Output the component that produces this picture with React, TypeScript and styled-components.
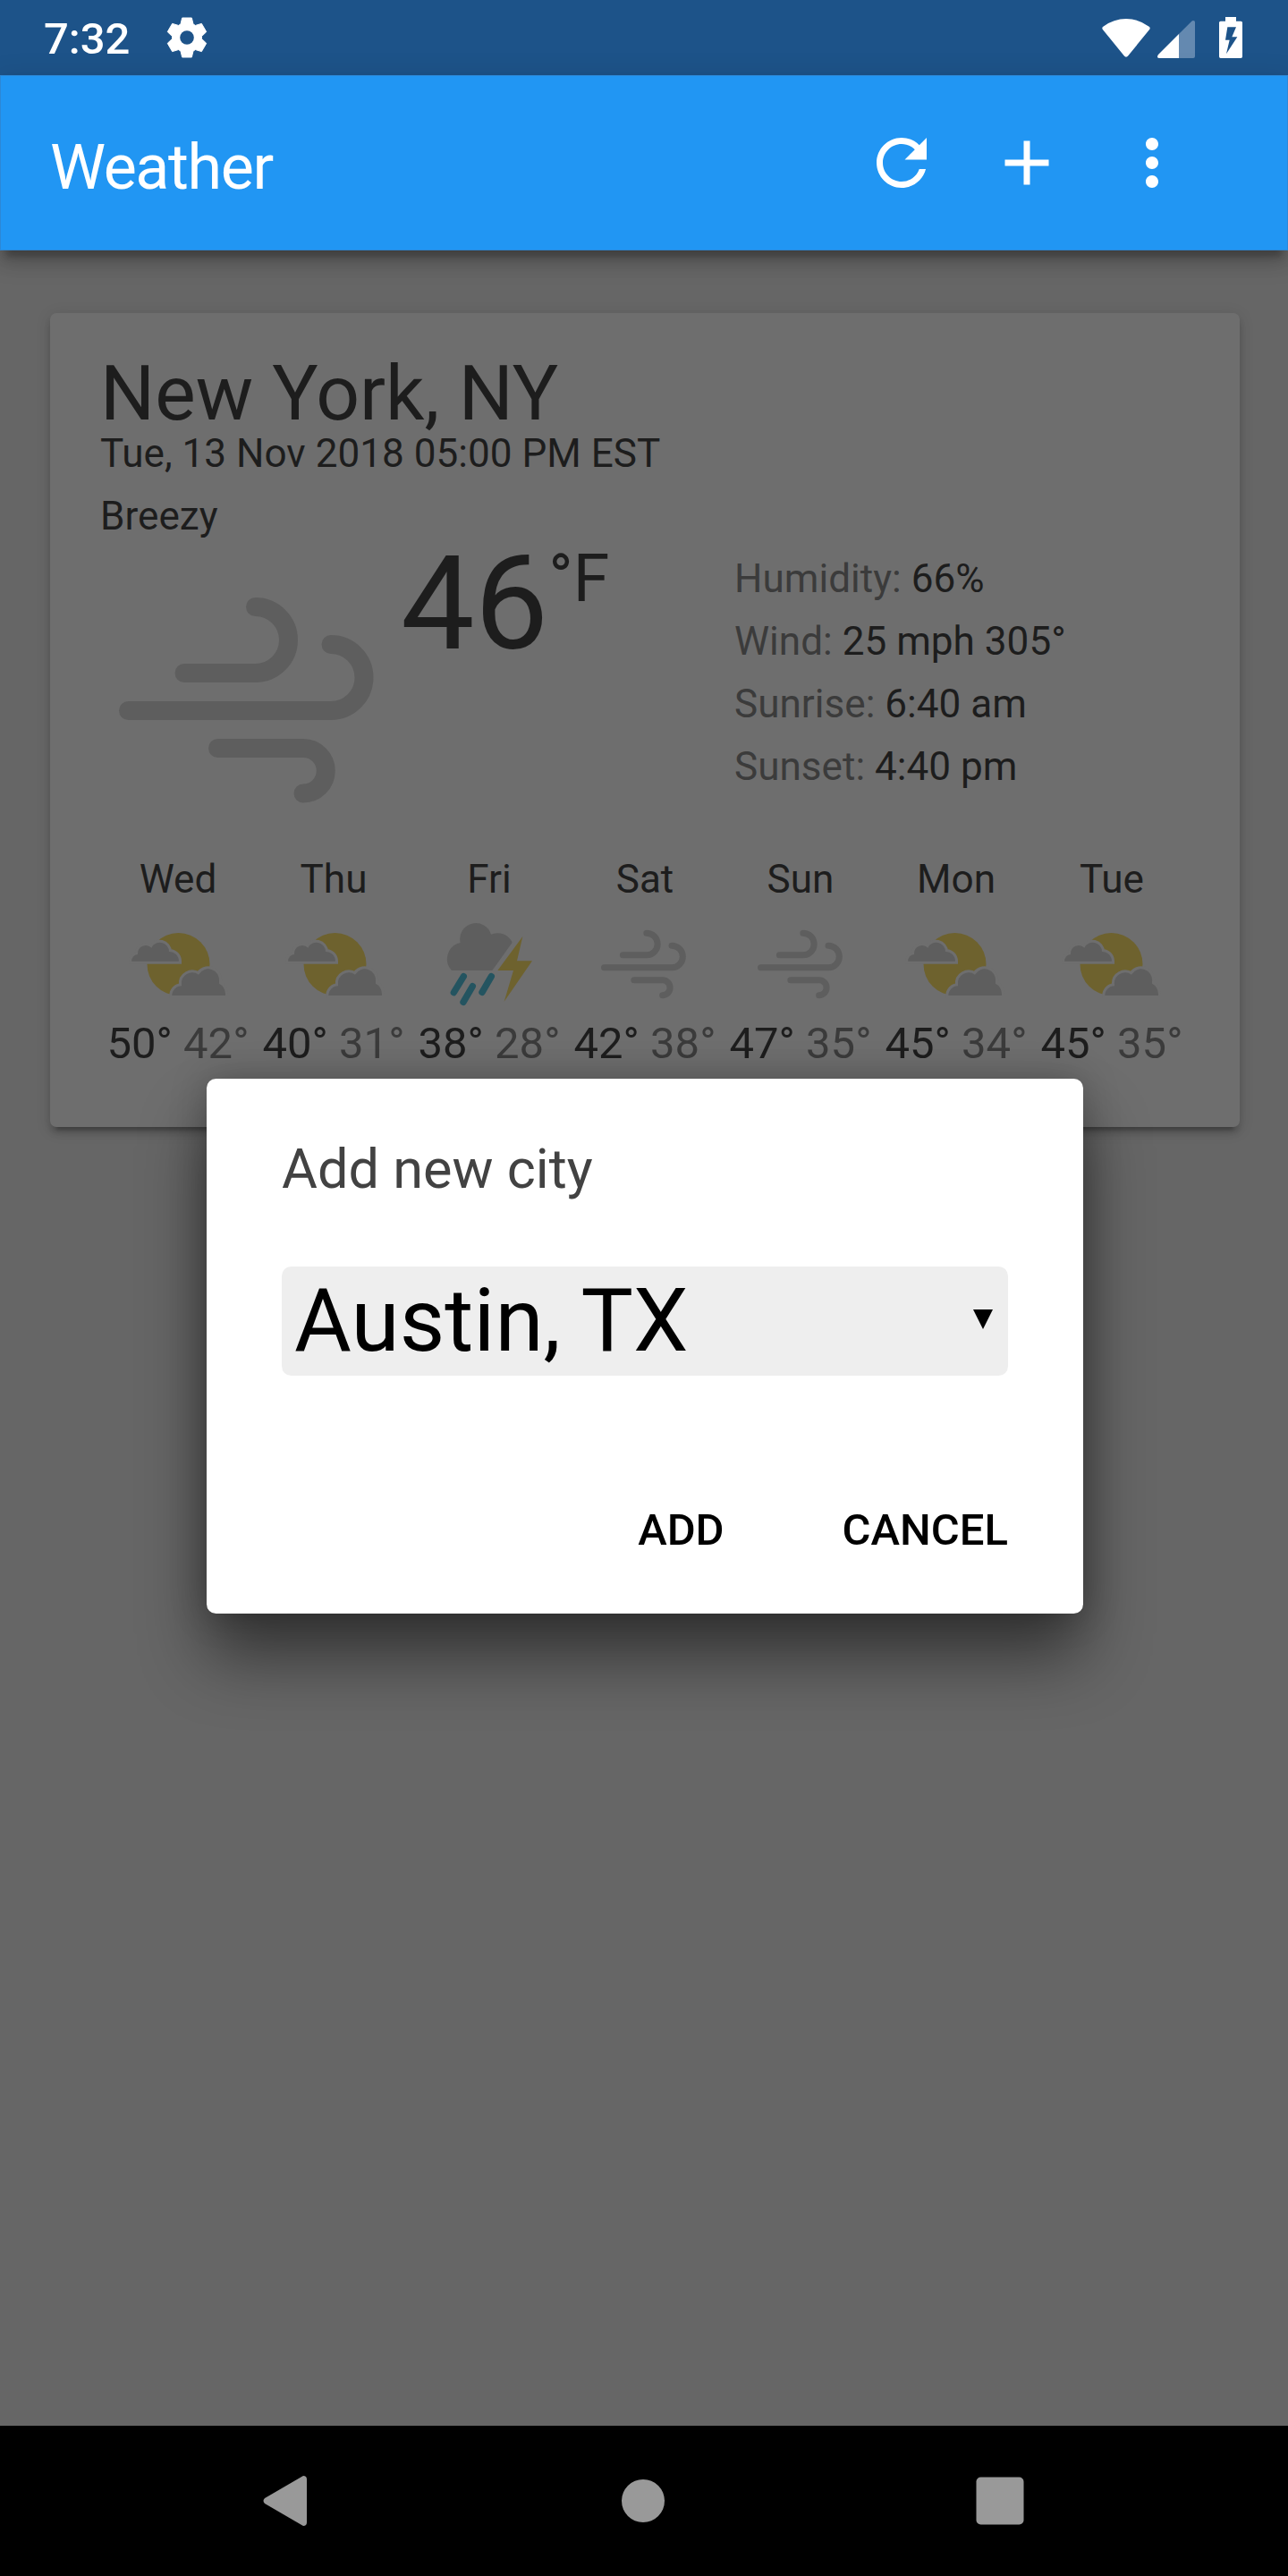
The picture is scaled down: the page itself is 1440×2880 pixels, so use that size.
import React from "react";
import styled, { createGlobalStyle } from "styled-components";
import { MdAdd, MdMoreVert, MdRefresh } from "react-icons/md";

const GlobalStyle = createGlobalStyle`
  *, *::before, *::after { box-sizing: border-box; }
  body { margin: 0; background: #666666; }
`;

const CARD = "#6e6e6e";
const INK = "#1d1d1d";
const MUTED = "#3b3b3b";
const CLOUD = "#5e5e5e";
const SUN = "#6e622e";
const RAIN = "#245460";

const Screen = styled.div`
  position: relative;
  display: flex;
  flex-direction: column;
  width: 1440px;
  height: 2880px;
  overflow: hidden;
  background: #666666;
  color: ${INK};
  font-family: Roboto, "Liberation Sans", sans-serif;
  font-size: 44.1px;
  line-height: 70px;
`;

const StatusBar = styled.header`
  display: flex;
  align-items: center;
  flex: none;
  height: 84px;
  padding: 0 51px 0 49px;
  background: #1d5389;
`;

const Clock = styled.span`
  width: 137px;
  padding-top: 4px;
  color: #ffffff;
  font-size: 49px;
  font-weight: 500;
`;

const StatusIcons = styled.div`
  display: flex;
  align-items: center;
  margin-left: auto;
`;

const AppBar = styled.nav`
  position: relative;
  display: flex;
  align-items: center;
  flex: none;
  height: 196px;
  padding: 0 110px 0 56px;
  background: #2196f3;
  color: #ffffff;
  box-shadow:
    inset 0 0 0 1px #2c88d6,
    0 14px 17.5px 0 rgba(0, 0, 0, 0.14),
    0 7px 31.5px 3.5px rgba(0, 0, 0, 0.12),
    0 14px 7px -7px rgba(0, 0, 0, 0.2);
`;

const AppTitle = styled.h1`
  flex: 1;
  margin: 0;
  padding-top: 9px;
  font-size: 70px;
  font-weight: 400;
  letter-spacing: -1.4px;
`;

const Actions = styled.div`
  display: flex;
  gap: 56px;
`;

const IconButton = styled.button`
  display: flex;
  width: 84px;
  height: 84px;
  padding: 0;
  border: 0;
  background: none;
  color: inherit;
  font-size: 84px;
`;

const Main = styled.main`
  flex: 1;
  padding: 70px 54px 0 56px;
`;

const Card = styled.section`
  height: 910px;
  padding: 56px;
  border-radius: 7px;
  background: ${CARD};
  box-shadow:
    0 7px 7px 0 rgba(0, 0, 0, 0.14),
    0 10.5px 3.5px -7px rgba(0, 0, 0, 0.2),
    0 3.5px 17.5px 0 rgba(0, 0, 0, 0.12);
`;

const City = styled.h2`
  margin: 0;
  padding-top: 1px;
  height: 66px;
  font-size: 85.75px;
  font-weight: 400;
  line-height: 66px;
`;

const Line = styled.div`
  white-space: nowrap;
`;

const Current = styled.div`
  display: flex;
  height: 336px;
`;

const Glyph = styled.svg<{ $size: number; $top: number; $bottom?: number; $shift?: number }>`
  display: block;
  flex: none;
  width: ${(p) => p.$size}px;
  height: ${(p) => p.$size}px;
  margin-top: ${(p) => p.$top}px;
  margin-bottom: ${(p) => p.$bottom ?? 0}px;
  transform: translateX(${(p) => p.$shift ?? 0}px);
`;

const Temperature = styled.div`
  display: flex;
  align-items: flex-start;
  width: 373px;
  font-size: 147px;
  line-height: 126px;
`;

const Scale = styled.span`
  font-size: 73.5px;
  line-height: 70px;
`;

const Muted = styled.span`
  color: ${MUTED};
`;

const Forecast = styled.div`
  display: grid;
  grid-template-columns: repeat(7, 174px);
`;

const Day = styled.div`
  display: flex;
  flex-direction: column;
  align-items: center;
`;

const Range = styled.div`
  font-size: 49px;
  white-space: nowrap;
`;

const Dialog = styled.div`
  position: absolute;
  left: 231px;
  top: 1206px;
  display: flex;
  flex-direction: column;
  width: 980px;
  height: 598px;
  padding: 66px 84px 0;
  border-radius: 10.5px;
  background: #ffffff;
  box-shadow: 0 0 42px rgba(0, 0, 0, 0.24), 0 49px 74px rgba(0, 0, 0, 0.48);
`;

const DialogTitle = styled.div`
  color: #424242;
  font-size: 61.25px;
`;

const SelectBox = styled.div`
  display: flex;
  align-items: center;
  justify-content: space-between;
  height: 122px;
  margin-top: 74px;
  padding: 0 17px 0 14px;
  border-radius: 10.5px;
  background: #eeeeee;
  color: #000000;
  font-size: 98px;
  letter-spacing: 0.1px;
`;

const Caret = styled.svg`
  margin-bottom: 4px;
`;

const DialogButtons = styled.div`
  display: flex;
  justify-content: flex-end;
  gap: 132px;
  margin-top: 138px;
`;

const DialogButton = styled.button`
  padding: 0;
  border: 0;
  background: none;
  color: #000000;
  font: 500 49px / 70px Roboto, "Liberation Sans", sans-serif;
`;

const NavBar = styled.footer`
  display: flex;
  align-items: center;
  justify-content: space-between;
  flex: none;
  height: 168px;
  padding: 0 295px 0 293px;
  background: #000000;
`;

type Kind = "cloudy" | "storm" | "wind";

const Wind = () => (
  <g fill="none" stroke={CLOUD} strokeWidth="21" strokeLinecap="round">
    <path d="M94 137.5H173.5a37 37 0 0 0 0-74" />
    <path d="M31.5 179.5H258a37 37 0 0 0 0-74" />
    <path d="M131.5 221.5H227a25.2 25.2 0 0 1 0 50.5" />
  </g>
);

const PartlyCloudy = () => (
  <>
    <circle cx="169.5" cy="168" r="105" fill={SUN} />
    {[
      "M12 158A23 23 0 0 1 33 135V132A27 27 0 0 1 79 113A31 31 0 0 1 138 126A32 32 0 0 1 171 158Z",
      "M148 273A32 32 0 0 1 180 241V236A36 36 0 0 1 237 203A37 37 0 0 1 306 226V233A40 40 0 0 1 327 267V273Z",
    ].map((d) => (
      <React.Fragment key={d}>
        <path d={d} fill={CARD} stroke={CARD} strokeWidth="18" />
        <path d={d} fill={CLOUD} />
      </React.Fragment>
    ))}
  </>
);

const Storm = () => (
  <>
    <path
      d="M42 189A56 56 0 0 1 71 96A53.4 53.4 0 0 1 174 68A54 54 0 0 1 245 95L178 189Z"
      fill={CLOUD}
    />
    <path d="M280 75L261 157H312L218 293L249 189H196Z" fill={SUN} />
    <path
      d="M82 209L49 263M112 242L81 295M175 209L144 262"
      stroke={RAIN}
      strokeWidth="22"
      strokeLinecap="round"
    />
  </>
);

type WeatherIconProps = { kind: Kind; size: number; top: number; bottom?: number; shift?: number };

const WeatherIcon = ({ kind, size, top, bottom, shift }: WeatherIconProps) => (
  <Glyph $size={size} $top={top} $bottom={bottom} $shift={shift} viewBox="0 0 336 336">
    {kind === "wind" && <Wind />}
    {kind === "cloudy" && <PartlyCloudy />}
    {kind === "storm" && <Storm />}
  </Glyph>
);

const gearPoints = Array.from({ length: 6 }, (_, i) => {
  const a = (i * Math.PI) / 3;
  return [[-21, -45], [-16, -66], [16, -66], [21, -45]]
    .map(([x, y]) => `${x * Math.cos(a) - y * Math.sin(a)},${x * Math.sin(a) + y * Math.cos(a)}`)
    .join(" ");
}).join(" ");

const GearIcon = () => (
  <svg width="46" height="46" viewBox="-69 -69 138 138">
    <polygon points={gearPoints} fill="#fff" stroke="#fff" strokeWidth="3" strokeLinejoin="round" />
    <circle r="23.5" fill="#1d5389" />
  </svg>
);

const WifiIcon = () => (
  <svg width="54" height="43" viewBox="0 0 162 129">
    <path
      d="M81 128Q77 128 74 124L2 35Q-1 30 4 26Q40 0 81 0T158 26Q163 30 160 35L88 124Q85 128 81 128Z"
      fill="#fff"
    />
  </svg>
);

const SignalSvg = styled.svg`
  margin: 3px 27px 0 8px;
`;

const SignalIcon = () => (
  <SignalSvg width="42" height="42" viewBox="0 0 126 126">
    <path d="M72 45L115 2Q119-1 123 1Q126 2 126 6V120Q126 126 120 126H72Z" fill="#6489b0" />
    <path d="M72 45V126H6Q1 126 0 122Q0 118 3 114Z" fill="#fff" />
  </SignalSvg>
);

const BatteryIcon = () => (
  <svg width="26" height="46" viewBox="0 0 78 138">
    <path
      fillRule="evenodd"
      fill="#fff"
      d="M21 0H57V14H73Q78 14 78 19V133Q78 138 73 138H5Q0 138 0 133V19Q0 14 5 14H21ZM28 34L21 77H35L24 124L61 67H43L57 34Z"
    />
  </svg>
);

const details = [
  ["Humidity:", "66%"],
  ["Wind:", "25 mph 305°"],
  ["Sunrise:", "6:40 am"],
  ["Sunset:", "4:40 pm"],
];

const days: { name: string; kind: Kind; high: number; low: number; shift: number }[] = [
  { name: "Wed", kind: "cloudy", high: 50, low: 42, shift: 0 },
  { name: "Thu", kind: "cloudy", high: 40, low: 31, shift: 1 },
  { name: "Fri", kind: "storm", high: 38, low: 28, shift: 0 },
  { name: "Sat", kind: "wind", high: 42, low: 38, shift: 0 },
  { name: "Sun", kind: "wind", high: 47, low: 35, shift: 1 },
  { name: "Mon", kind: "cloudy", high: 45, low: 34, shift: -2 },
  { name: "Tue", kind: "cloudy", high: 45, low: 35, shift: -1 },
];

export default function App() {
  return (
    <Screen>
      <GlobalStyle />
      <StatusBar>
        <Clock>7:32</Clock>
        <GearIcon />
        <StatusIcons>
          <WifiIcon />
          <SignalIcon />
          <BatteryIcon />
        </StatusIcons>
      </StatusBar>
      <AppBar>
        <AppTitle>Weather</AppTitle>
        <Actions>
          <IconButton aria-label="Refresh"><MdRefresh /></IconButton>
          <IconButton aria-label="Add"><MdAdd /></IconButton>
          <IconButton aria-label="More"><MdMoreVert /></IconButton>
        </Actions>
      </AppBar>
      <Main>
        <Card>
          <City>New York, NY</City>
          <Line>Tue, 13 Nov 2018 05:00 PM EST</Line>
          <Line>Breezy</Line>
          <Current>
            <WeatherIcon kind="wind" size={336} top={3} />
            <Temperature>
              46<Scale>°F</Scale>
            </Temperature>
            <div>
              {details.map(([label, value]) => (
                <Line key={label}>
                  <Muted>{label}</Muted> {value}
                </Line>
              ))}
            </div>
          </Current>
          <Forecast>
            {days.map((d) => (
              <Day key={d.name}>
                <span>{d.name}</span>
                <WeatherIcon kind={d.kind} size={112} top={4} bottom={-2} shift={d.shift} />
                <Range>
                  {d.high}° <Muted>{d.low}°</Muted>
                </Range>
              </Day>
            ))}
          </Forecast>
        </Card>
      </Main>
      <NavBar>
        <svg width="51" height="56" viewBox="0 0 51 56">
          <path d="M46 0Q50 0 50 4V52Q50 56 46 56L3 31Q0 28 3 25Z" fill="#999" />
        </svg>
        <svg width="50" height="50" viewBox="0 0 50 50">
          <circle cx="26" cy="25" r="24" fill="#999" />
        </svg>
        <svg width="54" height="54" viewBox="0 0 54 54">
          <rect x="0.5" y="0.5" width="53" height="53" rx="5" fill="#999" />
        </svg>
      </NavBar>
      <Dialog role="dialog">
        <DialogTitle>Add new city</DialogTitle>
        <SelectBox role="combobox">
          <span>Austin, TX</span>
          <Caret width="22" height="22" viewBox="0 0 22 22">
            <path d="M0 0H22L11 22Z" fill="#000" />
          </Caret>
        </SelectBox>
        <DialogButtons>
          <DialogButton>ADD</DialogButton>
          <DialogButton>CANCEL</DialogButton>
        </DialogButtons>
      </Dialog>
    </Screen>
  );
}
